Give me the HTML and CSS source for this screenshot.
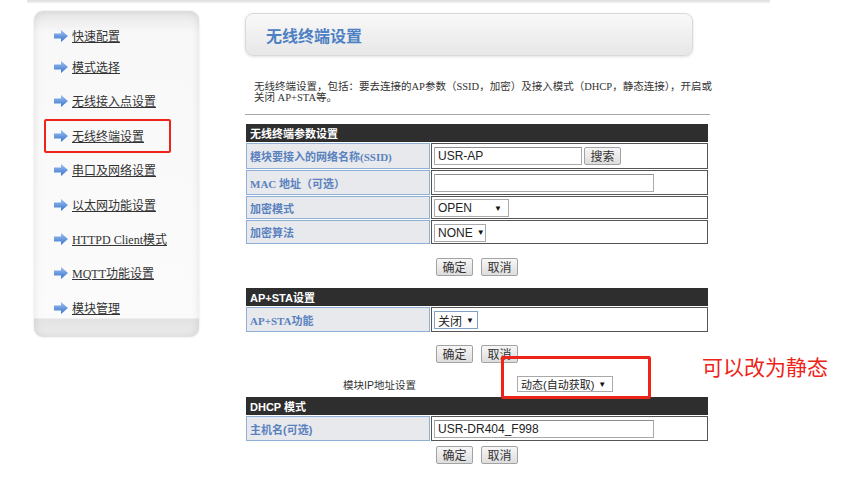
FILE: index.html
```html
<!DOCTYPE html>
<html lang="zh-CN">
<head>
<meta charset="utf-8">
<title>无线终端设置</title>
<link rel="stylesheet" href="styles.css">
</head>
<body>
<div class="topline"></div>
<div class="page">
  <aside class="sidebar">
    <ul class="menu">
      <li><svg class="arr" viewBox="0 0 14 12"><defs><linearGradient id="g1" x1="0" y1="0" x2="0" y2="1"><stop offset="0" stop-color="#9cc0f2"/><stop offset="1" stop-color="#3b74cc"/></linearGradient></defs><path d="M0 3.5H7V0L14 6L7 12V8.5H0Z" fill="url(#g1)"/></svg><a href="#">快速配置</a></li>
      <li><svg class="arr" viewBox="0 0 14 12"><path d="M0 3.5H7V0L14 6L7 12V8.5H0Z" fill="url(#g1)"/></svg><a href="#">模式选择</a></li>
      <li><svg class="arr" viewBox="0 0 14 12"><path d="M0 3.5H7V0L14 6L7 12V8.5H0Z" fill="url(#g1)"/></svg><a href="#">无线接入点设置</a></li>
      <li><svg class="arr" viewBox="0 0 14 12"><path d="M0 3.5H7V0L14 6L7 12V8.5H0Z" fill="url(#g1)"/></svg><a href="#">无线终端设置</a></li>
      <li><svg class="arr" viewBox="0 0 14 12"><path d="M0 3.5H7V0L14 6L7 12V8.5H0Z" fill="url(#g1)"/></svg><a href="#">串口及网络设置</a></li>
      <li><svg class="arr" viewBox="0 0 14 12"><path d="M0 3.5H7V0L14 6L7 12V8.5H0Z" fill="url(#g1)"/></svg><a href="#">以太网功能设置</a></li>
      <li><svg class="arr" viewBox="0 0 14 12"><path d="M0 3.5H7V0L14 6L7 12V8.5H0Z" fill="url(#g1)"/></svg><a href="#">HTTPD Client模式</a></li>
      <li><svg class="arr" viewBox="0 0 14 12"><path d="M0 3.5H7V0L14 6L7 12V8.5H0Z" fill="url(#g1)"/></svg><a href="#">MQTT功能设置</a></li>
      <li><svg class="arr" viewBox="0 0 14 12"><path d="M0 3.5H7V0L14 6L7 12V8.5H0Z" fill="url(#g1)"/></svg><a href="#">模块管理</a></li>
    </ul>
  </aside>
  <main class="content">
    <div class="titlebox"><h1>无线终端设置</h1></div>
    <p class="desc">无线终端设置，包括：要去连接的AP参数（SSID，加密）及接入模式（DHCP，静态连接），开启或<br>关闭 AP+STA等。</p>
    <div class="rule"></div>

    <table class="form">
      <tr><th colspan="2">无线终端参数设置</th></tr>
      <tr class="h26">
        <td class="label">模块要接入的网络名称(SSID)</td>
        <td class="field"><div class="fieldrow"><input class="text w148" value="USR-AP"><button class="btn">搜索</button></div></td>
      </tr>
      <tr class="h25">
        <td class="label">MAC 地址（可选）</td>
        <td class="field"><input class="text w220" value=""></td>
      </tr>
      <tr class="h23">
        <td class="label">加密模式</td>
        <td class="field"><span class="select w75">OPEN<span class="caret">▼</span></span></td>
      </tr>
      <tr class="h24">
        <td class="label">加密算法</td>
        <td class="field"><span class="select w52">NONE<span class="caret">▼</span></span></td>
      </tr>
    </table>
    <div class="actions"><button class="btn">确定</button><button class="btn">取消</button></div>

    <table class="form form2">
      <tr><th colspan="2">AP+STA设置</th></tr>
      <tr class="h25">
        <td class="label">AP+STA功能</td>
        <td class="field"><span class="select w44 focus">关闭<span class="caret">▼</span></span></td>
      </tr>
    </table>
    <div class="actions"><button class="btn">确定</button><button class="btn">取消</button></div>

    <div class="iprow">
      <span class="iplabel">模块IP地址设置</span>
      <span class="select w96 h16">动态(自动获取)<span class="caret">▼</span></span>
    </div>

    <table class="form form3">
      <tr><th colspan="2">DHCP 模式</th></tr>
      <tr class="h25">
        <td class="label">主机名(可选)</td>
        <td class="field"><input class="text w220" value="USR-DR404_F998"></td>
      </tr>
    </table>
    <div class="actions tight"><button class="btn">确定</button><button class="btn">取消</button></div>
  </main>
</div>

<div class="mark mark-menu"></div>
<div class="mark mark-ip"></div>
<div class="note">可以改为静态</div>
</body>
</html>
```

FILE: styles.css
```css
* { box-sizing: border-box; }

body {
  margin: 0;
  width: 848px;
  height: 481px;
  overflow: hidden;
  position: relative;
  background: #fff;
  color: #333;
  font-family: "Liberation Serif", "Noto Sans CJK SC", serif;
}

.topline {
  margin-left: 27px;
  width: 743px;
  height: 3px;
  background: linear-gradient(#dedede, #f1f1f1);
}

.page {
  display: flex;
  align-items: flex-start;
}

/* ---------- sidebar ---------- */
.sidebar {
  margin: 8px 0 0 34px;
  width: 165px;
  height: 326px;
  border-radius: 9px;
  background: linear-gradient(#e6e6e6 0, #f8f8f8 22px, #fbfbfb calc(100% - 19px), #e3e3e3 calc(100% - 18px), #ececec 100%);
  box-shadow: inset 0 0 9px rgba(0, 0, 0, 0.10), 0 0 2px rgba(0, 0, 0, 0.15);
  padding: 15px 0 0 20px;
}

.menu {
  list-style: none;
  margin: 0;
  padding: 0;
  display: flex;
  flex-direction: column;
  gap: 14.4px;
}

.menu li {
  display: flex;
  align-items: center;
  gap: 4px;
  height: 20px;
}

.menu li:first-child { margin-bottom: -3.4px; }

.arr {
  width: 14px;
  height: 12px;
  flex: none;
}

.menu a {
  color: #333;
  font-size: 12px;
  text-decoration: underline;
  white-space: nowrap;
}

/* ---------- content ---------- */
.content {
  margin: 10px 0 0 46px;
  width: 465px;
}

.titlebox {
  width: 448px;
  height: 43px;
  border: 1px solid #d9d9d9;
  border-radius: 8px;
  background: linear-gradient(#f9f9f9, #e7e7e7);
  box-shadow: 0 1px 3px rgba(0, 0, 0, 0.12);
  display: flex;
  align-items: center;
  padding-left: 20px;
}

.titlebox h1 {
  margin: 0;
  font: bold 16px "Noto Sans CJK SC", sans-serif;
  color: #4d80c4;
}

.desc {
  margin: 25px 0 0 9px;
  font-size: 10.5px;
  line-height: 11px;
  white-space: nowrap;
  color: #333;
}

.rule {
  margin-top: 11px;
  height: 1px;
  width: 465px;
  background: #a9a9a9;
}

/* ---------- tables ---------- */
.form {
  margin-top: 8px;
  width: 464px;
  border-collapse: separate;
  border-spacing: 1px;
}

.form2 { margin-top: 11px; }
.form3 { margin-top: 4px; }

.form th {
  height: 18px;
  padding: 0 4px;
  background: #2e2e2e;
  color: #fff;
  text-align: left;
  font: bold 11px "Liberation Sans", "Noto Sans CJK SC", sans-serif;
}

.form .label {
  width: 184px;
  padding: 0 3px;
  background: #e8e9ec;
  border: 1px solid #8fb0d6;
  color: #5a82bf;
  font: bold 11px "Liberation Serif", "Noto Sans CJK SC", serif;
  white-space: nowrap;
}

.form3 .label { font-family: "Liberation Sans", "Noto Sans CJK SC", sans-serif; }

.form .field {
  padding: 0 2px;
  border: 1px solid #555;
  background: #fff;
}

.h26 td { height: 26px; }
.h25 td { height: 25px; }
.h24 td { height: 24px; }
.h23 td { height: 23px; }

.fieldrow {
  display: flex;
  align-items: center;
  gap: 2px;
}

.text {
  display: block;
  height: 18px;
  margin: 0;
  padding: 0 3px;
  border: 1px solid #a9a9a9;
  border-top-color: #8c8c8c;
  background: #fff;
  color: #222;
  font: 12px "Liberation Sans", sans-serif;
}

.w148 { width: 148px; }
.w220 { width: 220px; }

.btn {
  width: 37px;
  height: 18px;
  padding: 0;
  margin: 0;
  border: 1px solid #a3a3a3;
  border-radius: 2px;
  background: linear-gradient(#f7f7f7, #dddddd);
  color: #333;
  font: 12px "Noto Sans CJK SC", sans-serif;
  line-height: 16px;
}

.select {
  display: inline-flex;
  align-items: center;
  justify-content: space-between;
  height: 18px;
  padding: 0 6px 0 3px;
  border: 1px solid #a9a9a9;
  background: #fff;
  color: #222;
  font: 12px "Liberation Sans", "Noto Sans CJK SC", sans-serif;
  vertical-align: middle;
  white-space: nowrap;
}

.select.focus { border-color: #7f9fc9; }
.select.h16 { height: 16px; font-size: 11px; }

.caret {
  font-size: 8px;
  color: #111;
  margin-left: 4px;
}

.w75 { width: 75px; }
.w52 { width: 52px; }
.w44 { width: 44px; }
.w96 { width: 96px; }

.actions {
  width: 464px;
  display: flex;
  justify-content: center;
  gap: 8px;
  margin-top: 13px;
}

.form2 + .actions { margin-top: 12px; }
.actions.tight { margin-top: 4px; justify-content: flex-start; padding-left: 191px; }

.iprow {
  display: flex;
  align-items: center;
  height: 16px;
  margin-top: 13px;
}

.iplabel {
  width: 174px;
  margin-left: 98px;
  font: 10.5px "Liberation Sans", "Noto Sans CJK SC", sans-serif;
  color: #333;
}

/* ---------- annotations ---------- */
.mark {
  position: absolute;
  border: 3px solid #ee2419;
  border-radius: 2px;
}

.mark-menu {
  left: 44px;
  top: 119px;
  width: 127px;
  height: 34px;
  border-width: 2.5px;
}

.mark-ip {
  left: 501px;
  top: 356px;
  width: 150px;
  height: 43px;
}

.note {
  position: absolute;
  left: 702px;
  top: 352px;
  font: 21px "Noto Sans CJK SC", sans-serif;
  color: #ee2419;
  line-height: 28px;
}
```
